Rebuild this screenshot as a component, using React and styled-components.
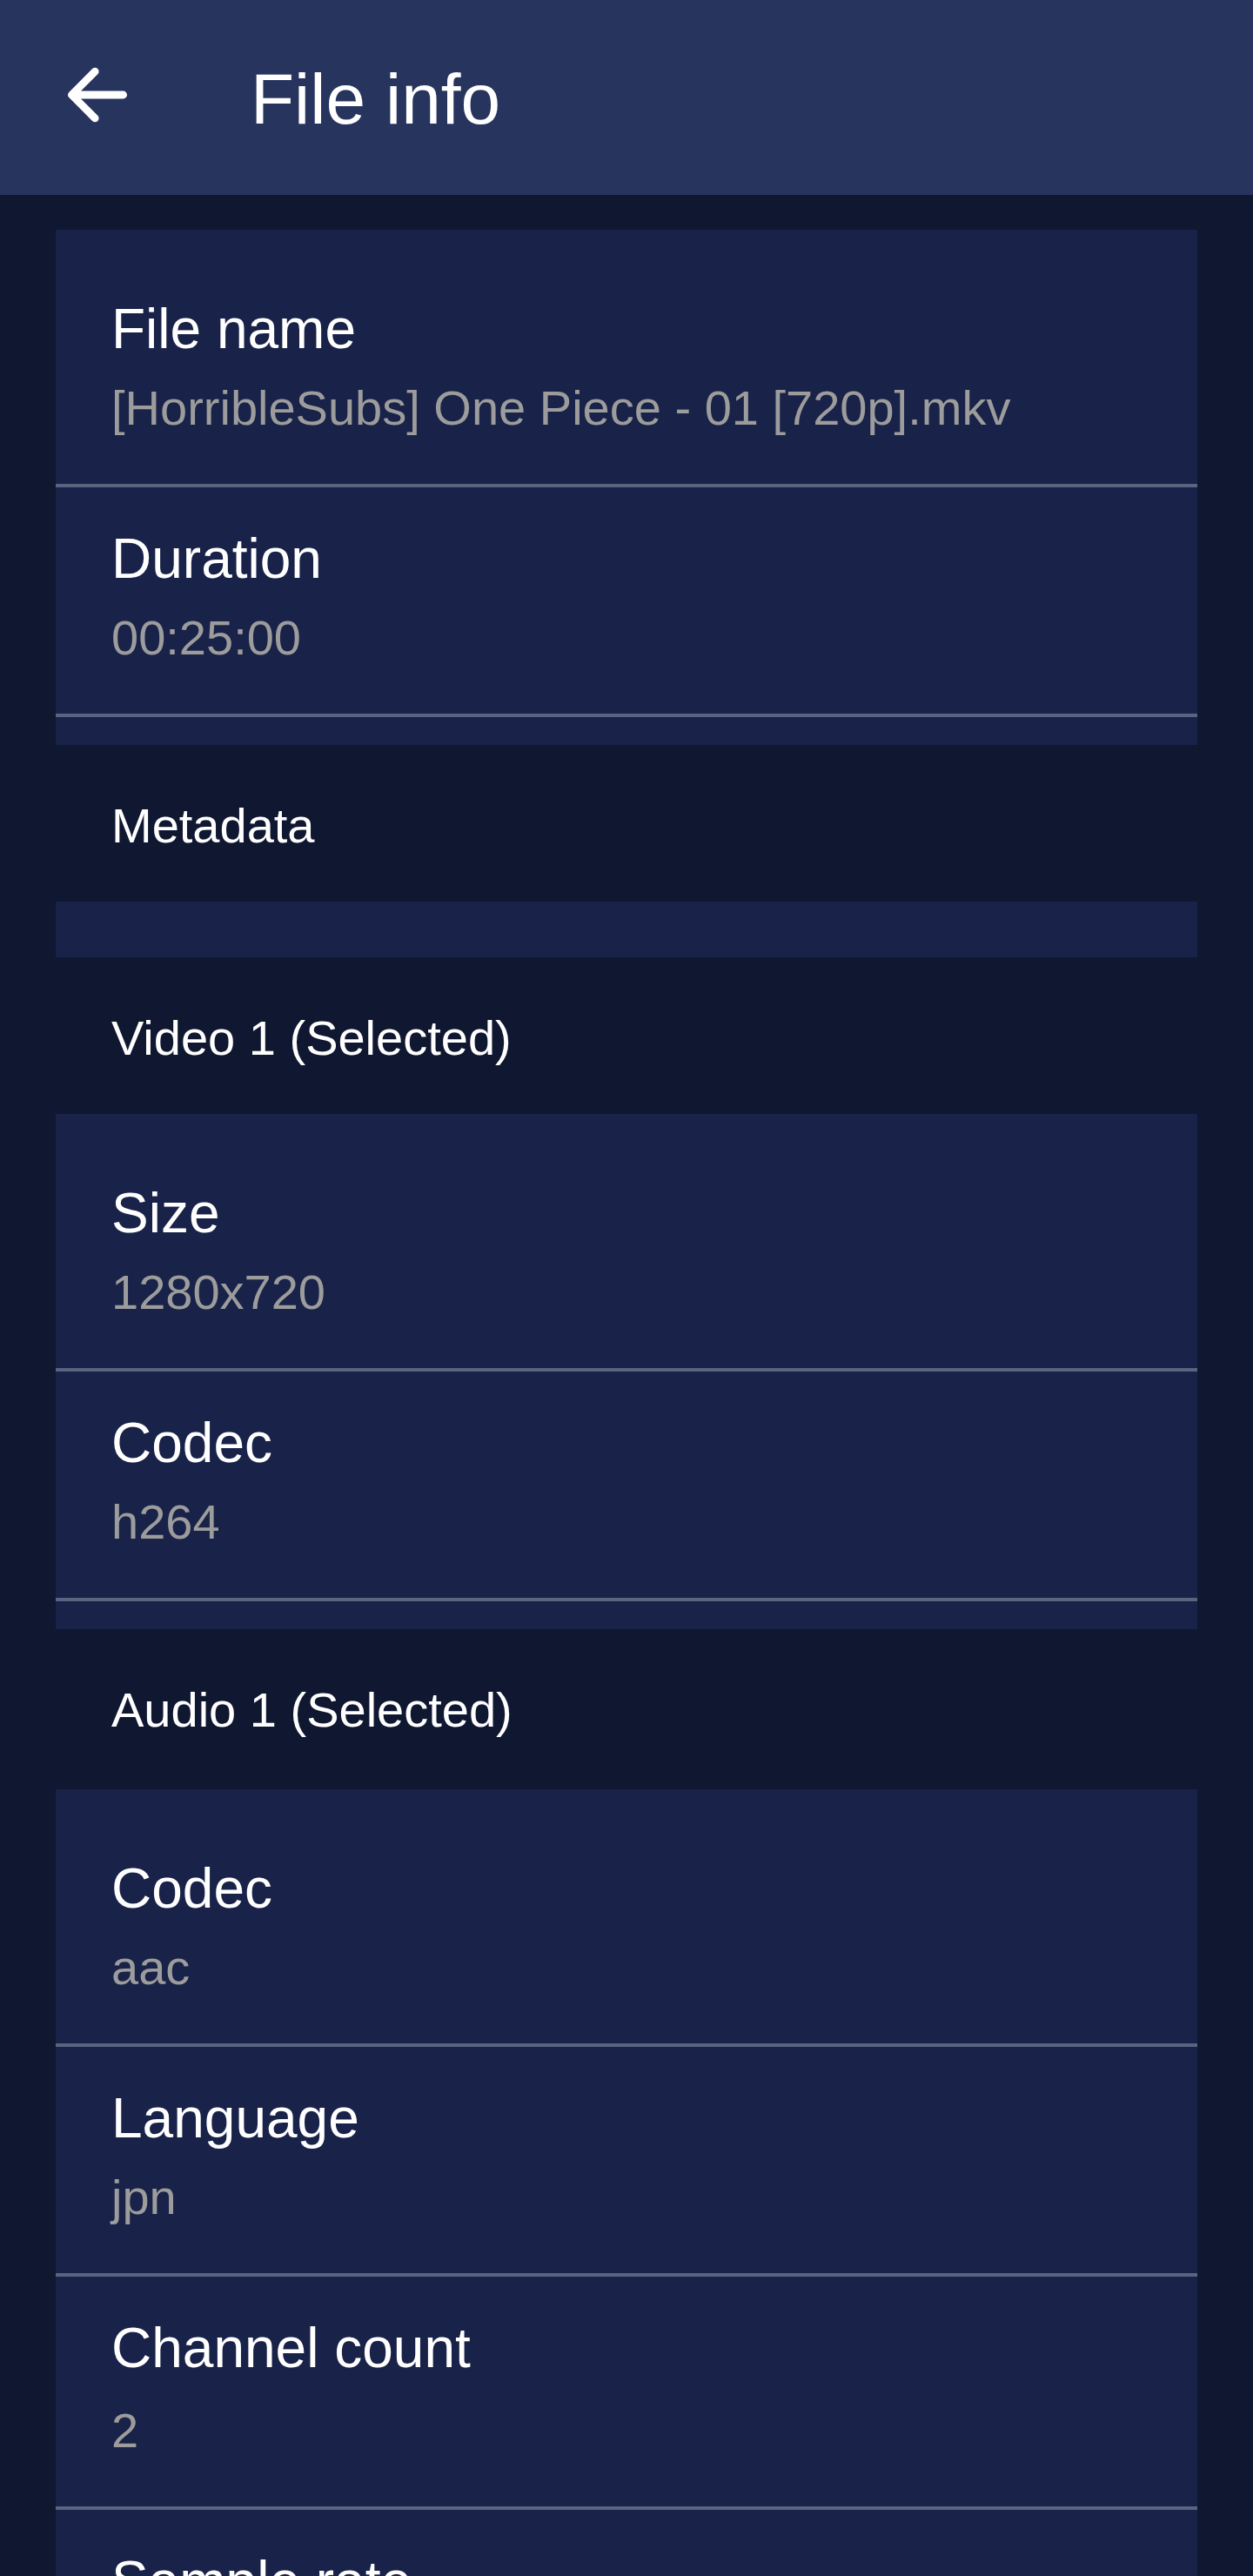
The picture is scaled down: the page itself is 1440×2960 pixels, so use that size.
import React from "react";
import styled, { createGlobalStyle } from "styled-components";

const GlobalStyle = createGlobalStyle`
  html, body {
    margin: 0;
    padding: 0;
    background-color: #101731;
  }
  body {
    font-family: "Liberation Sans", Arial, sans-serif;
    -webkit-font-smoothing: antialiased;
  }
`;

const sections = [
  {
    rows: [
      { label: "File name", value: "[HorribleSubs] One Piece - 01 [720p].mkv" },
      { label: "Duration", value: "00:25:00" },
    ],
  },
  { title: "Metadata", rows: [] },
  {
    title: "Video 1 (Selected)",
    rows: [
      { label: "Size", value: "1280x720" },
      { label: "Codec", value: "h264" },
    ],
  },
  {
    title: "Audio 1 (Selected)",
    tall: true,
    rows: [
      { label: "Codec", value: "aac" },
      { label: "Language", value: "jpn" },
      { label: "Channel count", value: "2", loose: true },
      { label: "Sample rate", value: "48000" },
    ],
  },
];

export default function App() {
  return (
    <Screen>
      <GlobalStyle />
      <AppBar>
        <NavButton aria-label="Back">
          <svg
            width="96"
            height="96"
            viewBox="0 0 24 24"
            fill="none"
            stroke="#ffffff"
            strokeWidth="2.2"
            strokeLinecap="round"
            strokeLinejoin="round"
          >
            <path d="M19.4 11.5H4.6M11.3 4.8L4.6 11.5L11.3 18.2" />
          </svg>
        </NavButton>
        <Title>File info</Title>
      </AppBar>

      <Content>
        {sections.map((section, i) => (
          <React.Fragment key={i}>
            {section.title && (
              <SectionHeader $tall={section.tall}>{section.title}</SectionHeader>
            )}
            <Card>
              {section.rows.map((row) => (
                <Row key={row.label}>
                  <Label>{row.label}</Label>
                  <Value $loose={row.loose}>{row.value}</Value>
                </Row>
              ))}
            </Card>
          </React.Fragment>
        ))}
      </Content>
    </Screen>
  );
}

const Screen = styled.div`
  min-height: 2960px;
  background-color: #101731;
  color: #ffffff;
`;

const AppBar = styled.header`
  display: flex;
  align-items: center;
  height: 224px;
  background-color: #27345d;
`;

const NavButton = styled.button`
  display: flex;
  align-items: center;
  justify-content: center;
  width: 224px;
  height: 224px;
  padding: 0 0 2px;
  border: none;
  background: transparent;
  cursor: pointer;
`;

const Title = styled.h1`
  margin: 0 0 0 64px;
  padding-top: 3px;
  font-size: 82px;
  font-weight: 400;
  line-height: 96px;
  color: #ffffff;
`;

const Content = styled.main`
  display: flex;
  flex-direction: column;
  padding: 40px 64px 0;
`;

const Card = styled.section`
  background-color: #192248;
  padding: 32px 0;
`;

const Row = styled.div`
  display: flex;
  flex-direction: column;
  padding: 44px 64px 54px;
  border-bottom: 4px solid #5a6380;
`;

const Label = styled.div`
  font-size: 64px;
  line-height: 76px;
  color: #ffffff;
`;

const Value = styled.div`
  margin-top: ${(p) => (p.$loose ? "24px" : "20px")};
  font-size: 56px;
  line-height: 66px;
  color: #9c9c9c;
  white-space: nowrap;
`;

const SectionHeader = styled.div`
  height: ${(p) => (p.$tall ? "184px" : "180px")};
  box-sizing: border-box;
  padding: 61px 64px 0;
  font-size: 56px;
  line-height: 64px;
  color: #ffffff;
`;
